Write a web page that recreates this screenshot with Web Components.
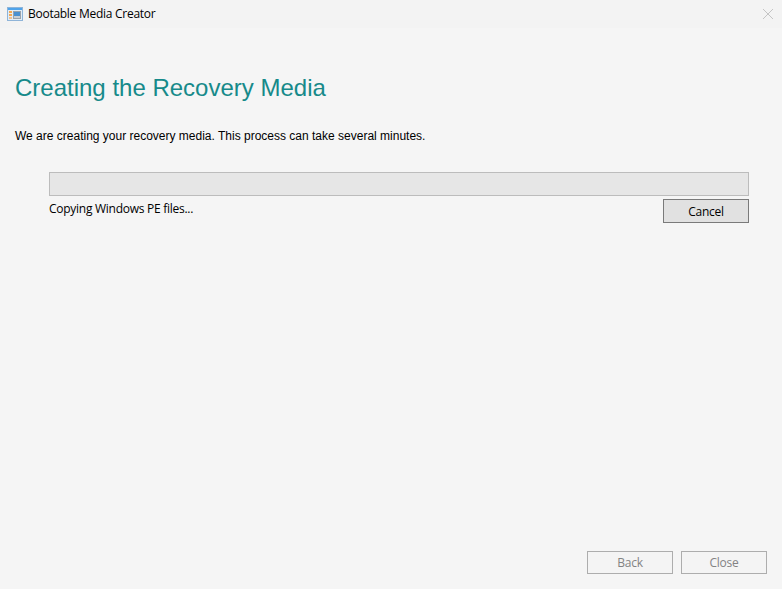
<!DOCTYPE html>
<html><head><meta charset="utf-8"><style>
html,body{margin:0;padding:0;background:#f5f5f5}
body{width:782px;height:589px;overflow:hidden}
</style></head><body>
<template id="t-btn"><style>
:host{display:block;width:86px;height:24px;box-sizing:border-box;border:1px solid #7a7a7a;background:#e1e1e1;color:#000;font:12px/23px "Open Sans","Noto Sans",sans-serif;letter-spacing:-.3px;text-align:center}
:host([disabled]){border-color:#adadad;background:#f4f4f4;color:#838383;height:23px;line-height:21px}
</style><slot></slot></template>
<template id="t-title"><style>
:host{display:flex;align-items:center;height:28px;background:#f3f3f3;color:#000;font:12px/28px "Open Sans","Noto Sans",sans-serif;letter-spacing:-.27px}
svg{display:block}
.icon{margin:0 5px 0 7px;flex:none}
.label{flex:1}
.x{margin-right:8px;flex:none}
</style>
<svg class="icon" width="16" height="16" viewBox="0 0 16 16">
<rect x=".5" y="1.5" width="15" height="13" fill="#e4edf5" stroke="#8fb4d8"/>
<rect x="1" y="2" width="14" height="2" fill="#4fa3ea"/>
<rect x="2" y="5" width="3" height="2" fill="#f5a850"/><rect x="2" y="8" width="3" height="2" fill="#f5a850"/><rect x="2" y="11" width="3" height="2" fill="#f0c090"/>
<rect x="6" y="5" width="8" height="8" fill="#9aa3ac"/><rect x="7" y="6" width="6" height="4" fill="#4a90d0"/><rect x="7" y="10" width="6" height="2" fill="#c9ced3"/>
</svg>
<span class="label"><slot></slot></span>
<svg class="x" width="12" height="12" viewBox="0 0 12 12"><path d="M1 1l10 10M11 1L1 11" stroke="#c4c4c4" stroke-width="1" fill="none"/></svg>
</template>
<template id="t-prog"><style>
:host{display:block;height:24px;box-sizing:border-box;border:1px solid #bcbcbc;background:#e6e6e6}
</style></template>
<template id="t-page"><style>
:host{display:flex;flex-direction:column;width:782px;height:589px;background:#f5f5f5;box-sizing:border-box;overflow:hidden}
.content{flex:1;padding:0 15px;display:flex;flex-direction:column}
h1{margin:45px 0 0;font:400 24px/30px "Liberation Sans",Arial,sans-serif;color:#178a8a}
p{margin:25px 0 0;font:12px/16px "Liberation Sans",Arial,sans-serif;color:#000}
.task{margin:28px 18px 0 34px}
.row{display:flex;justify-content:space-between;align-items:flex-start;margin-top:3px}
.status{font:12px/20px "Open Sans","Noto Sans",sans-serif;letter-spacing:-.27px;color:#000}
.foot{display:flex;justify-content:flex-end;gap:8px;padding:0 15px 15px}
</style>
<book-title><slot name="title"></slot></book-title>
<div class="content"><h1><slot name="head"></slot></h1><p><slot name="text"></slot></p>
<div class="task"><media-progress></media-progress><div class="row"><span class="status"><slot name="status"></slot></span><wiz-button><slot name="cancel"></slot></wiz-button></div></div></div>
<div class="foot"><wiz-button disabled><slot name="back"></slot></wiz-button><wiz-button disabled><slot name="close"></slot></wiz-button></div>
</template>
<wizard-page>
<span slot="title">Bootable Media Creator</span>
<span slot="head">Creating the Recovery Media</span>
<span slot="text">We are creating your recovery media. This process can take several minutes.</span>
<span slot="status">Copying Windows PE files...</span>
<span slot="cancel">Cancel</span>
<span slot="back">Back</span>
<span slot="close">Close</span>
</wizard-page>
<script>
function def(n,id){customElements.define(n,class extends HTMLElement{constructor(){super();this.attachShadow({mode:'open'}).appendChild(document.getElementById(id).content.cloneNode(true))}})}
def('wiz-button','t-btn');def('book-title','t-title');def('media-progress','t-prog');def('wizard-page','t-page');
</script>
</body></html>
